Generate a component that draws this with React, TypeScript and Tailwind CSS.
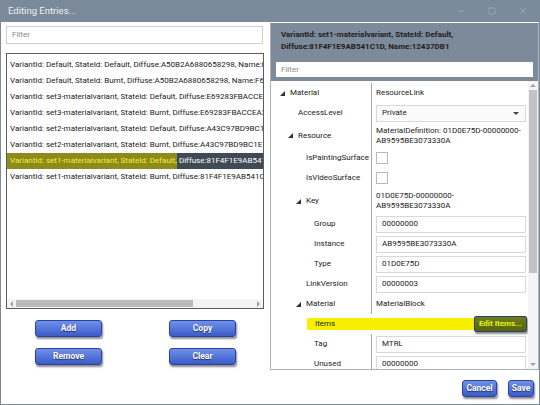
import { Minus, Square, X } from "lucide-react";

const entries = [
  "VariantId: Default, StateId: Default, Diffuse:A50B2A6880658298, Name:0E1C2A7B",
  "VariantId: Default, StateId: Burnt, Diffuse:A50B2A6880658298, Name:F6E1D2C3",
  "VariantId: set3-materialvariant, StateId: Default, Diffuse:E69283FBACCEA3D1",
  "VariantId: set3-materialvariant, StateId: Burnt, Diffuse:E69283FBACCEA3D1",
  "VariantId: set2-materialvariant, StateId: Default, Diffuse:A43C97BD9BC1E1F0",
  "VariantId: set2-materialvariant, StateId: Burnt, Diffuse:A43C97BD9BC1E1F0",
  "SELECTED",
  "VariantId: set1-materialvariant, StateId: Burnt, Diffuse:81F4F1E9AB541C1D",
];

function BlueButton({ label, className }: { label: string; className: string }) {
  return (
    <button
      className={`h-[17px] shrink-0 whitespace-nowrap rounded-[3px] border border-[#2c409c] bg-gradient-to-b from-[#6f91ea] to-[#3b5cc9] text-[8.5px] font-bold text-white shadow-[1px_2px_2px_rgba(0,0,0,0.45)] [text-shadow:0_1px_1px_rgba(0,0,0,0.6)] ${className}`}
    >
      {label}
    </button>
  );
}

function Arrow({ level }: { level: number }) {
  return (
    <span
      className="mr-[5px] inline-block h-0 w-0 border-b-[5px] border-l-[5px] border-b-[#333] border-l-transparent"
      style={{ marginLeft: 9 + level * 8 }}
    />
  );
}

function Label({ text, level, open }: { text: string; level: number; open?: boolean }) {
  return (
    <div className="flex w-[100px] shrink-0 items-center whitespace-nowrap">
      {open ? (
        <Arrow level={level} />
      ) : (
        <span className="inline-block" style={{ width: 19 + level * 8 }} />
      )}
      <span>{text}</span>
    </div>
  );
}

function TextBox({ value }: { value: string }) {
  return (
    <div className="flex h-[17px] w-[150px] items-center border border-[#d9d9d9] bg-white pl-[5px]">
      {value}
    </div>
  );
}

function Row({
  text,
  level,
  open,
  h = "h-[20px]",
  children,
}: {
  text: string;
  level: number;
  open?: boolean;
  h?: string;
  children?: React.ReactNode;
}) {
  return (
    <div className={`flex ${h}`}>
      <Label text={text} level={level} open={open} />
      <div className="flex min-w-0 flex-1 items-center whitespace-nowrap border-l border-[#a7a7a7] pl-[4px]">
        {children}
      </div>
    </div>
  );
}

export default function App() {
  return (
    <div className="flex h-[405px] w-[540px] flex-col bg-[#7b8a9a] font-['Roboto',sans-serif] text-[8px] text-[#222]">
      <div className="flex h-[22px] shrink-0 items-center justify-between">
        <span className="pl-[8px] text-[9.5px] text-[#eef1f4]">Editing Entries...</span>
        <div className="flex items-center gap-[22px] pr-[12px] text-[#d3d9df]">
          <Minus size={10} strokeWidth={1} />
          <Square size={8} strokeWidth={1} />
          <X size={10} strokeWidth={1} />
        </div>
      </div>

      <div className="mx-px mb-px flex flex-1 flex-col bg-white">
        <div className="flex h-[348px]">
          {/* left side */}
          <div className="flex w-[269px] shrink-0 flex-col pl-[5px] pr-[5px] pt-[4px]">
            <div className="flex h-[18px] w-[257px] items-center border border-[#cfcfcf] pl-[5px] text-[#8b8b8b]">
              Filter
            </div>
            <div className="mt-[9px] flex h-[256px] w-[258px] flex-col border border-[#5c5c5c]">
              <div className="flex-1 overflow-hidden pt-[3px]">
                {entries.map((e, i) =>
                  e === "SELECTED" ? (
                    <div key={i} className="flex h-[16px] items-center whitespace-nowrap bg-[#3f4a55] text-white">
                      <span className="flex h-full items-center bg-[#8d8b1c] pl-[3px] text-[#eef03a]">
                        VariantId: set1-materialvariant, StateId: Default,
                      </span>
                      <span>&nbsp;Diffuse:81F4F1E9AB541C1D, Name:12437DB1</span>
                    </div>
                  ) : (
                    <div key={i} className="flex h-[16px] items-center whitespace-nowrap pl-[3px]">
                      {e}
                    </div>
                  )
                )}
              </div>
              <div className="flex h-[9px] items-center bg-[#f4f4f4] px-[3px]">
                <span className="mr-[3px] h-0 w-0 border-y-[3px] border-r-[3px] border-y-transparent border-r-[#a0a0a0]" />
                <div className="h-[7px] w-[177px] bg-[#bababa]" />
                <div className="flex-1" />
                <span className="h-0 w-0 border-y-[3px] border-l-[3px] border-y-transparent border-l-[#a0a0a0]" />
              </div>
            </div>
            <div className="mt-[11px] grid grid-cols-[67px_67px] gap-x-[67px] gap-y-[11px] pl-[29px]">
              <BlueButton label="Add" className="w-[67px]" />
              <BlueButton label="Copy" className="w-[67px]" />
              <BlueButton label="Remove" className="w-[67px]" />
              <BlueButton label="Clear" className="w-[67px]" />
            </div>
          </div>

          {/* right side */}
          <div className="flex w-[269px] min-w-0 shrink-0 flex-col border border-[#a9b1ba] border-t-white">
            <div className="bg-[#7d8a99] px-[5px] pb-[4px] pt-[6px]">
              <div className="pl-[5px] font-bold leading-[11.5px] text-[#1e1e1e]">
                VariantId: set1-materialvariant, StateId: Default,
                <br />
                Diffuse:81F4F1E9AB541C1D, Name:12437DB1
              </div>
              <div className="mt-[10px] flex h-[15px] items-center bg-white pl-[5px] text-[#8b8b8b]">Filter</div>
            </div>
            <div className="flex min-h-0 flex-1 overflow-hidden">
              <div className="min-w-0 flex-1 overflow-hidden pt-[2px]">
                <Row text="Material" level={0} open>
                  ResourceLink
                </Row>
                <Row text="AccessLevel" level={1}>
                  <div className="flex h-[17px] w-[150px] items-center justify-between border border-[#d9d9d9] bg-[#fafafa] pl-[5px] pr-[6px]">
                    <span>Private</span>
                    <span className="h-0 w-0 border-x-[3px] border-t-[3px] border-x-transparent border-t-[#444]" />
                  </div>
                </Row>
                <Row text="Resource" level={1} open h="h-[25px]">
                  <div className="leading-[10px]">
                    MaterialDefinition: 01D0E75D-00000000-
                    <br />
                    AB9595BE3073330A
                  </div>
                </Row>
                <Row text="IsPaintingSurface" level={2}>
                  <div className="h-[12px] w-[12px] border border-[#b8b8b8] bg-white" />
                </Row>
                <Row text="IsVideoSurface" level={2}>
                  <div className="h-[12px] w-[12px] border border-[#b8b8b8] bg-white" />
                </Row>
                <Row text="Key" level={2} open h="h-[26px]">
                  <div className="leading-[10px]">
                    01D0E75D-00000000-
                    <br />
                    AB9595BE3073330A
                  </div>
                </Row>
                <Row text="Group" level={3}>
                  <TextBox value="00000000" />
                </Row>
                <Row text="Instance" level={3}>
                  <TextBox value="AB9595BE3073330A" />
                </Row>
                <Row text="Type" level={3}>
                  <TextBox value="01D0E75D" />
                </Row>
                <Row text="LinkVersion" level={2}>
                  <TextBox value="00000003" />
                </Row>
                <Row text="Material" level={2} open>
                  MaterialBlock
                </Row>
                <div className="flex h-[20px] items-center">
                  <div className="flex w-[101px] shrink-0 items-center pl-[36px]">
                    <div className="flex h-[12px] flex-1 items-center bg-[#f6ef00] pl-[8px]">Items</div>
                  </div>
                  <div className="flex min-w-0 flex-1 items-center pr-[1px]">
                    <div className="h-[12px] flex-1 bg-[#f6ef00]" />
                    <button className="h-[16px] w-[53px] shrink-0 whitespace-nowrap rounded-[2px] border border-[#2d3c7c] bg-gradient-to-b from-[#6d7d18] to-[#55650a] text-[8px] font-bold text-[#e9f224] shadow-[1px_2px_2px_rgba(0,0,0,0.45)]">
                      Edit Items...
                    </button>
                  </div>
                </div>
                <Row text="Tag" level={3}>
                  <TextBox value="MTRL" />
                </Row>
                <Row text="Unused" level={3}>
                  <TextBox value="00000000" />
                </Row>
              </div>
              <div className="flex w-[10px] shrink-0 flex-col items-center bg-[#f4f4f4] py-[3px]">
                <span className="h-0 w-0 border-x-[3px] border-b-[3px] border-x-transparent border-b-[#a0a0a0]" />
                <div className="mt-[3px] h-[183px] w-[8px] bg-[#c2c2c2]" />
                <div className="flex-1" />
                <span className="h-0 w-0 border-x-[3px] border-t-[3px] border-x-transparent border-t-[#a0a0a0]" />
              </div>
            </div>
          </div>
        </div>

        <div className="flex flex-1 items-start justify-end gap-[11px] pr-[5px] pt-[10px]">
          <BlueButton label="Cancel" className="w-[35px]" />
          <BlueButton label="Save" className="w-[26px]" />
        </div>
      </div>
    </div>
  );
}
